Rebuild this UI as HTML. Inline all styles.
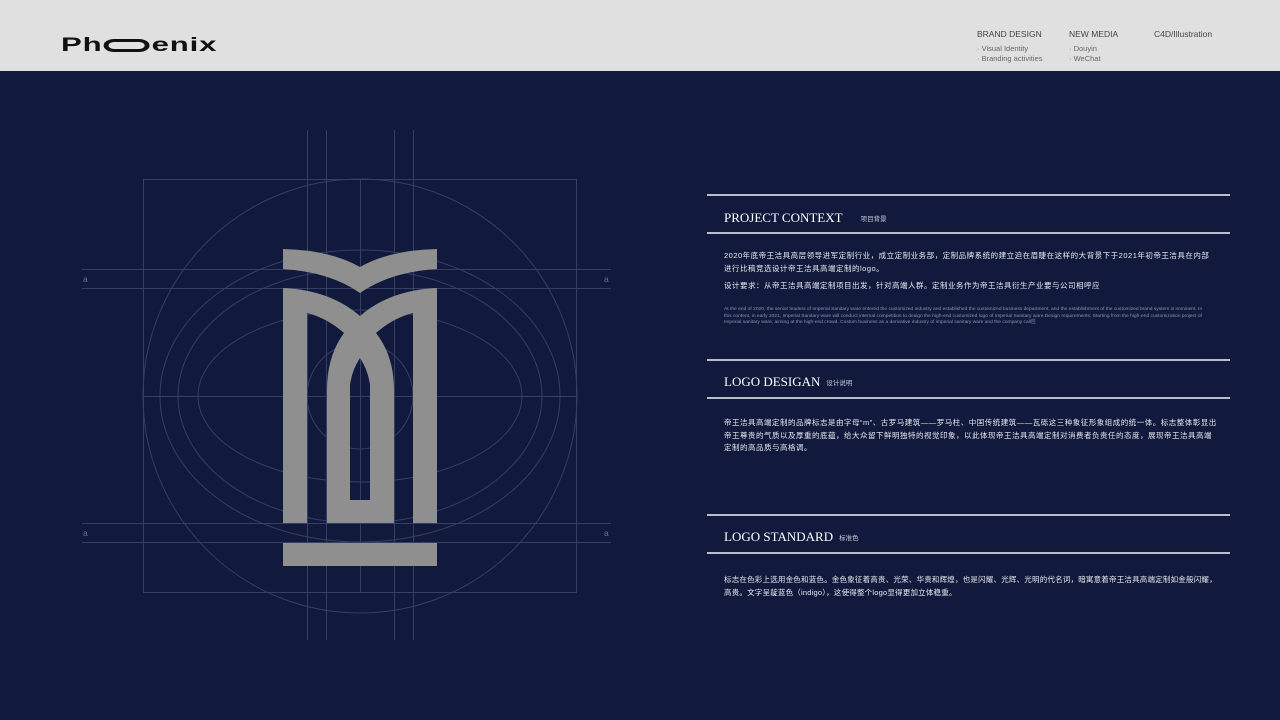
<!DOCTYPE html>
<html><head><meta charset="utf-8"><style>
*{margin:0;padding:0;box-sizing:border-box}
body{width:1280px;height:720px;overflow:hidden;background:#111a3d;font-family:"Liberation Sans","Noto Sans CJK SC",sans-serif;position:relative}
.hdr{position:absolute;left:0;top:0;width:1280px;height:71px;background:#e0e0e0}
.logo{position:absolute;left:61px;top:35px;font:bold 19px "Liberation Sans",sans-serif;letter-spacing:0.5px;color:#111;transform:scaleX(1.64);transform-origin:0 0;white-space:nowrap}
.nav{position:absolute;top:29px;font-size:8.5px;color:#444}
.nav div.s{font-size:7.5px;color:#666;line-height:10px}
.nav div.t{margin-bottom:5px}
.hl{position:absolute;left:707px;width:523px;height:1.5px;background:#b8bccb}
.h{position:absolute;left:724px;color:#fff;font-family:"Liberation Serif","Noto Serif CJK SC",serif;font-size:13px;white-space:nowrap}
.h span{font-family:"Liberation Sans","Noto Sans CJK SC",sans-serif;font-size:6.5px;color:#c8cad6;margin-left:18px;vertical-align:1px}
.b{position:absolute;left:724px;color:#e8e9ef;font-size:7.5px;letter-spacing:0.5px;line-height:12.5px;white-space:nowrap}
.e{position:absolute;left:724px;color:#8d93ad;font-size:4.9px;line-height:6.5px;white-space:nowrap}
</style></head><body>
<div class="hdr">
<div class="logo">Ph<span style="display:inline-block;width:30px;height:13px;position:relative;vertical-align:-1px"><span style="position:absolute;left:1px;top:0;width:28px;height:13px;border:3px solid #111;border-radius:7px"></span></span>enix</div>
<div class="nav" style="left:977px"><div class="t">BRAND DESIGN</div><div class="s">· Visual Identity</div><div class="s">· Branding activities</div></div>
<div class="nav" style="left:1069px"><div class="t">NEW MEDIA</div><div class="s">· Douyin</div><div class="s">· WeChat</div></div>
<div class="nav" style="left:1154px"><div class="t">C4D/Illustration</div></div>
</div>

<svg style="position:absolute;left:0;top:0" width="700" height="720" viewBox="0 0 700 720">
<g fill="none" stroke="#353f62" stroke-width="1">
<rect x="143.5" y="179.5" width="433" height="413"/>
<circle cx="360" cy="396" r="217"/>
<ellipse cx="360" cy="396" rx="200" ry="146"/>
<ellipse cx="360" cy="396" rx="182" ry="127"/>
<ellipse cx="360" cy="396" rx="162" ry="86"/>
<circle cx="360" cy="396" r="53"/>
<line x1="307.5" y1="130" x2="307.5" y2="640"/><line x1="326.5" y1="130" x2="326.5" y2="640"/>
<line x1="394.5" y1="130" x2="394.5" y2="640"/><line x1="413.5" y1="130" x2="413.5" y2="640"/>
<line x1="360.5" y1="179" x2="360.5" y2="592"/><line x1="143" y1="396.5" x2="577" y2="396.5"/>
<line x1="82" y1="269.5" x2="611" y2="269.5"/><line x1="82" y1="288.5" x2="611" y2="288.5"/>
<line x1="82" y1="523.5" x2="611" y2="523.5"/><line x1="82" y1="542.5" x2="611" y2="542.5"/>
</g>
<g fill="#6c7186" font-size="8.5" font-family="Liberation Sans,sans-serif">
<text x="83" y="282">a</text><text x="604" y="282">a</text>
<text x="83" y="536">a</text><text x="604" y="536">a</text>
</g>
<g fill="#8f8f8f" fill-rule="evenodd">
<path d="M283,249 Q330,250 360,267 Q390,250 437,249 L437,269 Q390,272 360,293 Q330,272 283,269 Z"/>
<path d="M283,288 Q330,290 360,316 Q390,290 437,288 L437,523 L413,523 L413,313 Q393,318 376,333 Q394,356 394,390 L394,523 L327,523 L327,390 Q327,356 344,333 Q327,318 307,313 L307,523 L283,523 Z M350,500 L370,500 L370,385 Q368,370 360,358 Q352,370 350,385 Z"/>
<rect x="283" y="543" width="154" height="23"/>
</g>
</svg>

<div class="hl" style="top:194px"></div>
<div class="h" style="top:210px">PROJECT CONTEXT<span>项目背景</span></div>
<div class="hl" style="top:232px"></div>
<div class="b" style="top:250px">2020年底帝王洁具高层领导进军定制行业，成立定制业务部，定制品牌系统的建立迫在眉睫在这样的大背景下于2021年初帝王洁具在内部<br>进行比稿竞选设计帝王洁具高端定制的logo。</div>
<div class="b" style="top:280px">设计要求：从帝王洁具高端定制项目出发，针对高端人群。定制业务作为帝王洁具衍生产业要与公司相呼应</div>
<div class="e" style="top:307px">At the end of 2020, the senior leaders of Imperial Sanitary ware entered the customized industry and established the customized business department, and the establishment of the customized brand system is imminent. In<br>this content, in early 2021, Imperial Sanitary ware will conduct internal competition to design the high-end customized logo of Imperial Sanitary ware.Design requirements: Starting from the high-end customization project of<br>Imperial sanitary ware, aiming at the high-end crowd. Custom business as a derivative industry of imperial sanitary ware and the company call应</div>

<div class="hl" style="top:359px"></div>
<div class="h" style="top:374px">LOGO DESIGAN<span style="margin-left:6px">设计说明</span></div>
<div class="hl" style="top:397px"></div>
<div class="b" style="top:417px">帝王洁具高端定制的品牌标志是由字母“m”、古罗马建筑——罗马柱、中国传统建筑——瓦砾这三种象征形象组成的统一体。标志整体彰显出<br>帝王尊贵的气质以及厚重的底蕴，给大众留下鲜明独特的视觉印象，以此体现帝王洁具高端定制对消费者负责任的态度，展现帝王洁具高端<br>定制的高品质与高格调。</div>

<div class="hl" style="top:514px"></div>
<div class="h" style="top:529px">LOGO STANDARD<span style="margin-left:6px">标准色</span></div>
<div class="hl" style="top:552px"></div>
<div class="b" style="top:574px;letter-spacing:0.2px">标志在色彩上选用金色和蓝色。金色象征着高贵、光荣、华贵和辉煌，也是闪耀、光辉、光明的代名词，暗寓意着帝王洁具高端定制如金般闪耀，<br>高贵。文字呈靛蓝色（indigo），这使得整个logo显得更加立体稳重。</div>
</body></html>
